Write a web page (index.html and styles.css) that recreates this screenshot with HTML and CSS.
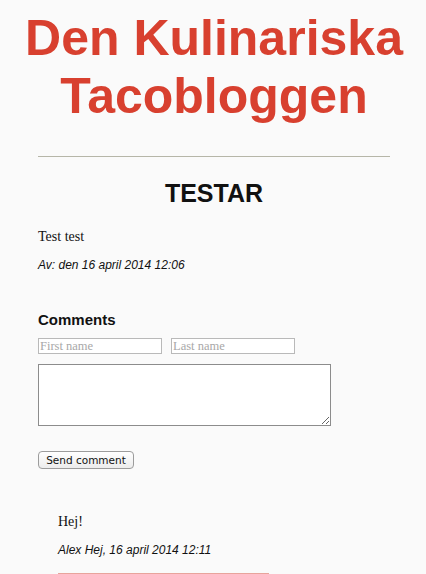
FILE: index.html
```html
<!DOCTYPE html>
<html lang="sv">
<head>
<meta charset="utf-8">
<title>Den Kulinariska Tacobloggen</title>
<link rel="stylesheet" href="styles.css">
</head>
<body>
<div class="page">
  <h1 class="site-title">Den Kulinariska Tacobloggen</h1>
  <hr class="divider">
  <article class="post">
    <h2 class="post-title">TESTAR</h2>
    <p class="post-body">Test test</p>
    <p class="meta">Av: den 16 april 2014 12:06</p>
  </article>
  <section class="comments">
    <h3 class="comments-title">Comments</h3>
    <form class="comment-form">
      <div class="name-row">
        <input class="field" type="text" placeholder="First name">
        <input class="field" type="text" placeholder="Last name">
      </div>
      <textarea class="message"></textarea>
      <button class="send" type="button">Send comment</button>
    </form>
    <div class="comment">
      <p class="comment-body">Hej!</p>
      <p class="meta">Alex Hej, 16 april 2014 12:11</p>
      <hr class="comment-rule">
    </div>
  </section>
</div>
</body>
</html>
```

FILE: styles.css
```css
html, body {
  margin: 0;
  padding: 0;
  background: #fafafa;
}

.page {
  width: 352px;
  margin: 0 0 0 38px;
  padding-top: 9px;
}

.site-title {
  margin: 0 -38px 0 -38px;
  font: 700 50px/58px "Liberation Sans", Arial, sans-serif;
  color: #d8402f;
  text-align: center;
}

.divider {
  margin: 31px 0 0 0;
  border: 0;
  border-top: 1px solid #b6b6a8;
  height: 0;
}

.post-title {
  margin: 22px 0 0 0;
  font: 700 25px/29px "Liberation Sans", Arial, sans-serif;
  color: #111;
  text-align: center;
}

.post-body,
.comment-body {
  margin: 21px 0 0 0;
  font: 14px/16px "Liberation Serif", "Times New Roman", serif;
  color: #111;
}

.meta {
  margin: 13px 0 0 0;
  font: italic 12px/14px "Liberation Sans", Arial, sans-serif;
  color: #111;
}

.comments-title {
  margin: 39px 0 0 0;
  font: 700 15px/17px "Liberation Sans", Arial, sans-serif;
  color: #111;
}

.comment-form {
  display: flex;
  flex-direction: column;
  align-items: flex-start;
  margin-top: 10px;
}

.name-row {
  display: flex;
  gap: 9px;
}

.field {
  box-sizing: border-box;
  width: 124px;
  height: 16px;
  margin: 0;
  padding: 0 1px;
  border: 1px solid #b9b9b9;
  background: #fff;
  font: 12.5px "Liberation Serif", "Times New Roman", serif;
  color: #222;
}

.field::placeholder {
  color: #a8a8a8;
}

.message {
  box-sizing: border-box;
  width: 293px;
  height: 62px;
  margin: 10px 0 0 0;
  border: 1px solid #8c8c8c;
  background: #fff;
}

.send {
  box-sizing: border-box;
  height: 18px;
  width: 96px;
  margin: 25px 0 0 0;
  padding: 0;
  border: 1px solid #9c9c9c;
  border-radius: 4px;
  background: linear-gradient(#ffffff, #ececec);
  font: 10.5px "DejaVu Sans", Verdana, sans-serif;
  color: #111;
}

.comment {
  margin-left: 20px;
  width: 211px;
  padding-top: 24px;
}

.comment-rule {
  margin: 16px 0 0 0;
  border: 0;
  border-top: 1px solid #e8a49c;
  height: 0;
}
```
